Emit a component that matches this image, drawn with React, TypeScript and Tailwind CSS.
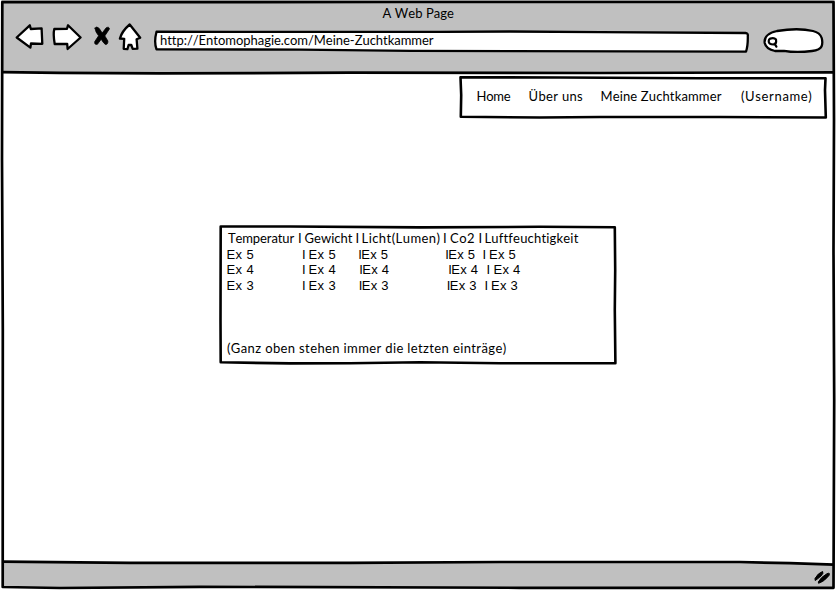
import { useLayoutEffect, useRef } from 'react';

type Piece = { text: string; x: number; w: number };

/** A run of text whose letter spacing is adjusted to fill its width. */
function Fit({ text, w, ml = 0 }: { text: string; w: number; ml?: number }) {
  const ref = useRef<HTMLSpanElement>(null);
  useLayoutEffect(() => {
    const el = ref.current;
    if (!el) return;
    el.style.letterSpacing = '0px';
    const natural = el.getBoundingClientRect().width;
    el.style.letterSpacing = `${(w - natural) / text.length}px`;
  }, [text, w]);
  return (
    <span className="block shrink-0 whitespace-pre" style={{ width: w, marginLeft: ml }}>
      <span ref={ref} className="inline-block">{text}</span>
    </span>
  );
}

function Row({ pieces, left }: { pieces: Piece[]; left: number }) {
  return (
    <div className="flex h-[15.75px] leading-[16px]">
      {pieces.map((p, i) => {
        const end = i === 0 ? left : pieces[i - 1].x + pieces[i - 1].w;
        return <Fit key={i} text={p.text} w={p.w} ml={p.x - end} />;
      })}
    </div>
  );
}

const heading: Piece[] = [
  { text: 'Temperatur', x: 228, w: 66 },
  { text: 'I', x: 298, w: 3 },
  { text: 'Gewicht', x: 304.5, w: 48 },
  { text: 'I', x: 355.5, w: 3 },
  { text: 'Licht(Lumen)', x: 361.5, w: 79 },
  { text: 'I', x: 443, w: 3 },
  { text: 'Co2', x: 450, w: 25 },
  { text: 'I', x: 478.5, w: 3 },
  { text: 'Luftfeuchtigkeit', x: 484.5, w: 94 },
];

function entry(n: number, a: number, b: number, c: number, d: number): Piece[] {
  const ex = `Ex ${n}`;
  return [
    { text: ex, x: 226.5, w: 27.5 },
    { text: 'I', x: 302, w: 3 },
    { text: ex, x: 308.5, w: 27.5 },
    { text: 'I', x: a, w: 2.5 },
    { text: ex, x: a + 3, w: 27 },
    { text: 'I', x: b, w: 2.5 },
    { text: ex, x: b + 3, w: 27 },
    { text: 'I', x: c, w: 3 },
    { text: ex, x: d, w: 27 },
  ];
}

const rows = [
  entry(5, 358.3, 445.3, 482.5, 489),
  entry(4, 359.3, 448.3, 486.5, 493.5),
  entry(3, 358.8, 446.8, 484.5, 491),
];

export default function App() {
  return (
    <div className="relative flex h-[590px] w-[836px] flex-col overflow-hidden bg-white font-['Lato','Liberation_Sans',sans-serif] text-[13px] text-black [font-kerning:none] [font-variant-ligatures:none]">
      <header className="h-[73px] shrink-0 bg-[#c0c0c0]">
        <div className="flex h-[22px] pt-[5px] leading-[16px]">
          <Fit text="A Web Page" w={71.5} ml={382.5} />
        </div>
        <div className="flex h-[32px]">
          <svg className="h-[32px] w-[154px] shrink-0" viewBox="0 22 154 32" fill="white" stroke="black" strokeWidth="2.3" strokeLinejoin="round" strokeLinecap="round">
            <path d="M16.7 37.5 L29.8 25.3 L30.8 29 L41.6 28.3 L42.3 43.8 L31 43.5 L30.4 47.7 Z" />
            <path d="M80.6 37.5 L68 25.2 L67 28.8 L54.3 29 Q53 34 54.7 44 L67.2 43.8 L67.6 49 Z" />
            <path d="M129.7 24.5 L140.2 37.8 L136.6 39.2 L137.4 48.6 L132.7 48.8 L131.3 45 L128.6 45 L127.4 49.2 L123.7 48.8 L124.2 38.8 L119.9 38.5 Q122 31 129.7 24.5 Z" />
            <path fill="black" strokeWidth="0.8" d="M95 28.2 Q96.5 25.5 99.2 28.4 L102.2 33 L106.2 27.8 Q109.2 26.3 109.4 29 L104.8 35.9 L107.9 41 Q108 44.8 105.3 44.4 Q103.8 43.5 101.2 39.2 L97.4 44.3 Q94.1 45 94.7 41.7 L98.6 35.8 Q95.3 32 95 28.2 Z" />
          </svg>
          <div className="relative h-[32px] w-[596px] shrink-0">
            <svg className="absolute inset-0 h-[32px] w-[596px]" viewBox="154 22 596 32" fill="white" stroke="black" strokeWidth="2.3" strokeLinejoin="round">
              <path d="M156.5 31.7 L230 31.8 L440 31.8 L510 31.5 L600 32.2 L745.5 33 Q748.3 33.2 747.8 36 Q748 46 746 51.7 L510 51.2 L410 50.8 L300 49.6 L156.5 49.3 Q153.8 42 156.5 31.7 Z" />
            </svg>
            <div className="relative flex pt-[10px] leading-[16px]">
              <Fit text="http://Entomophagie.com/Meine-Zuchtkammer" w={273.5} ml={6} />
            </div>
          </div>
          <svg className="ml-[12px] h-[32px] w-[64px] shrink-0" viewBox="762 22 64 32" fill="white" stroke="black" strokeWidth="2.3" strokeLinecap="round">
            <path d="M777 31 Q798 27.5 813 31 Q820 32.7 821.7 38 Q823 43 821.5 46.5 Q820 50 812 51 Q796 53 784 50.8 L775 51 Q766 49 764.7 43 Q763.5 34 777 31 Z" />
            <path fill="none" strokeWidth="2.2" d="M770 38.7 Q774 37.2 776 39.5 Q776.8 44.5 773.5 44.5 Q768.5 44.5 768.7 41 Q768.8 39.4 770 38.7 M774.5 43.7 L776.4 46.7" />
          </svg>
        </div>
      </header>

      <nav className="relative ml-[459px] mt-[3px] h-[43px] w-[369px] shrink-0">
        <svg className="absolute inset-0 h-[43px] w-[369px]" viewBox="459 76 369 43" fill="white" stroke="black" strokeWidth="2.6" strokeLinejoin="round">
          <path d="M460.5 77.3 L560 77.5 L700 78.3 L825.5 78.3 L825 90 L825.8 117.5 L720 117 L600 117 L540 117.5 L460.8 116.7 L461.2 95 Z" />
        </svg>
        <div className="relative flex pt-[12px] leading-[16px]">
          <Fit text="Home" w={34} ml={17.5} />
          <Fit text="Über uns" w={54.5} ml={18} />
          <Fit text="Meine Zuchtkammer" w={121} ml={17.5} />
          <Fit text="(Username)" w={71.5} ml={19.5} />
        </div>
      </nav>

      <main className="relative ml-[218px] mt-[106px] h-[141px] w-[400px] shrink-0">
        <svg className="absolute inset-0 h-[141px] w-[400px]" viewBox="218 225 400 141" fill="white" stroke="black" strokeWidth="2.6" strokeLinejoin="round">
          <path d="M220.7 226.5 L290 226.5 L420 227.4 L540 226.8 L614.8 227.2 L615.2 270 L614.8 310 L615.4 363.3 L500 363.2 L420 362.3 L350 363.3 L290 363.4 L220.7 362.3 L220.5 320 Z" />
        </svg>
        <div className="relative pt-[5px]">
          <Row pieces={heading} left={218} />
          <div className="pt-[0.75px] font-['Liberation_Sans',sans-serif]">
            {rows.map((r, i) => (
              <Row key={i} pieces={r} left={218} />
            ))}
          </div>
          <div className="flex pt-[46px] leading-[16px]">
            <Fit text="(Ganz oben stehen immer die letzten einträge)" w={279.5} ml={9} />
          </div>
        </div>
      </main>

      <footer className="mt-auto h-[28px] shrink-0">
        <svg className="h-[28px] w-[836px]" viewBox="0 562 836 28">
          <path fill="#c0c0c0" d="M2 562 L750 562 L833 565 L833 588 L2 588 Z" />
          <path fill="black" stroke="black" strokeWidth="1" strokeLinejoin="round" d="M815 578.5 Q818 573 822.6 571.5 Q824 573 821 576 Q817 579.5 815.2 580.5 Z M818.3 582 Q821 577 827 573.7 Q830.5 572.2 829 575.5 Q824.5 581.5 818.6 583.3 Z" />
        </svg>
      </footer>

      <svg className="pointer-events-none absolute inset-0 h-[590px] w-[836px]" viewBox="0 0 836 590" fill="none" stroke="black" strokeWidth="2.7" strokeLinejoin="round">
        <path stroke="white" strokeWidth="2" d="M0.2 0 V590 M835.8 0 V590" />
        <path d="M2.3 2.2 L400 2 L833.5 2 L834 120 L833.5 250 L834.2 400 L833.5 587.8 L520 587.8 L200 586.8 L60 588 L2.7 587 L2.8 330 L2 160 Z" />
        <path d="M2 72.2 L60 72.8 L160 73.4 L350 72.7 L600 73 L834 72.3" />
        <path d="M2 561.7 L130 562.8 L350 562.8 L500 562 L740 562 L790 563.2 L834 564.7" />
      </svg>
    </div>
  );
}
